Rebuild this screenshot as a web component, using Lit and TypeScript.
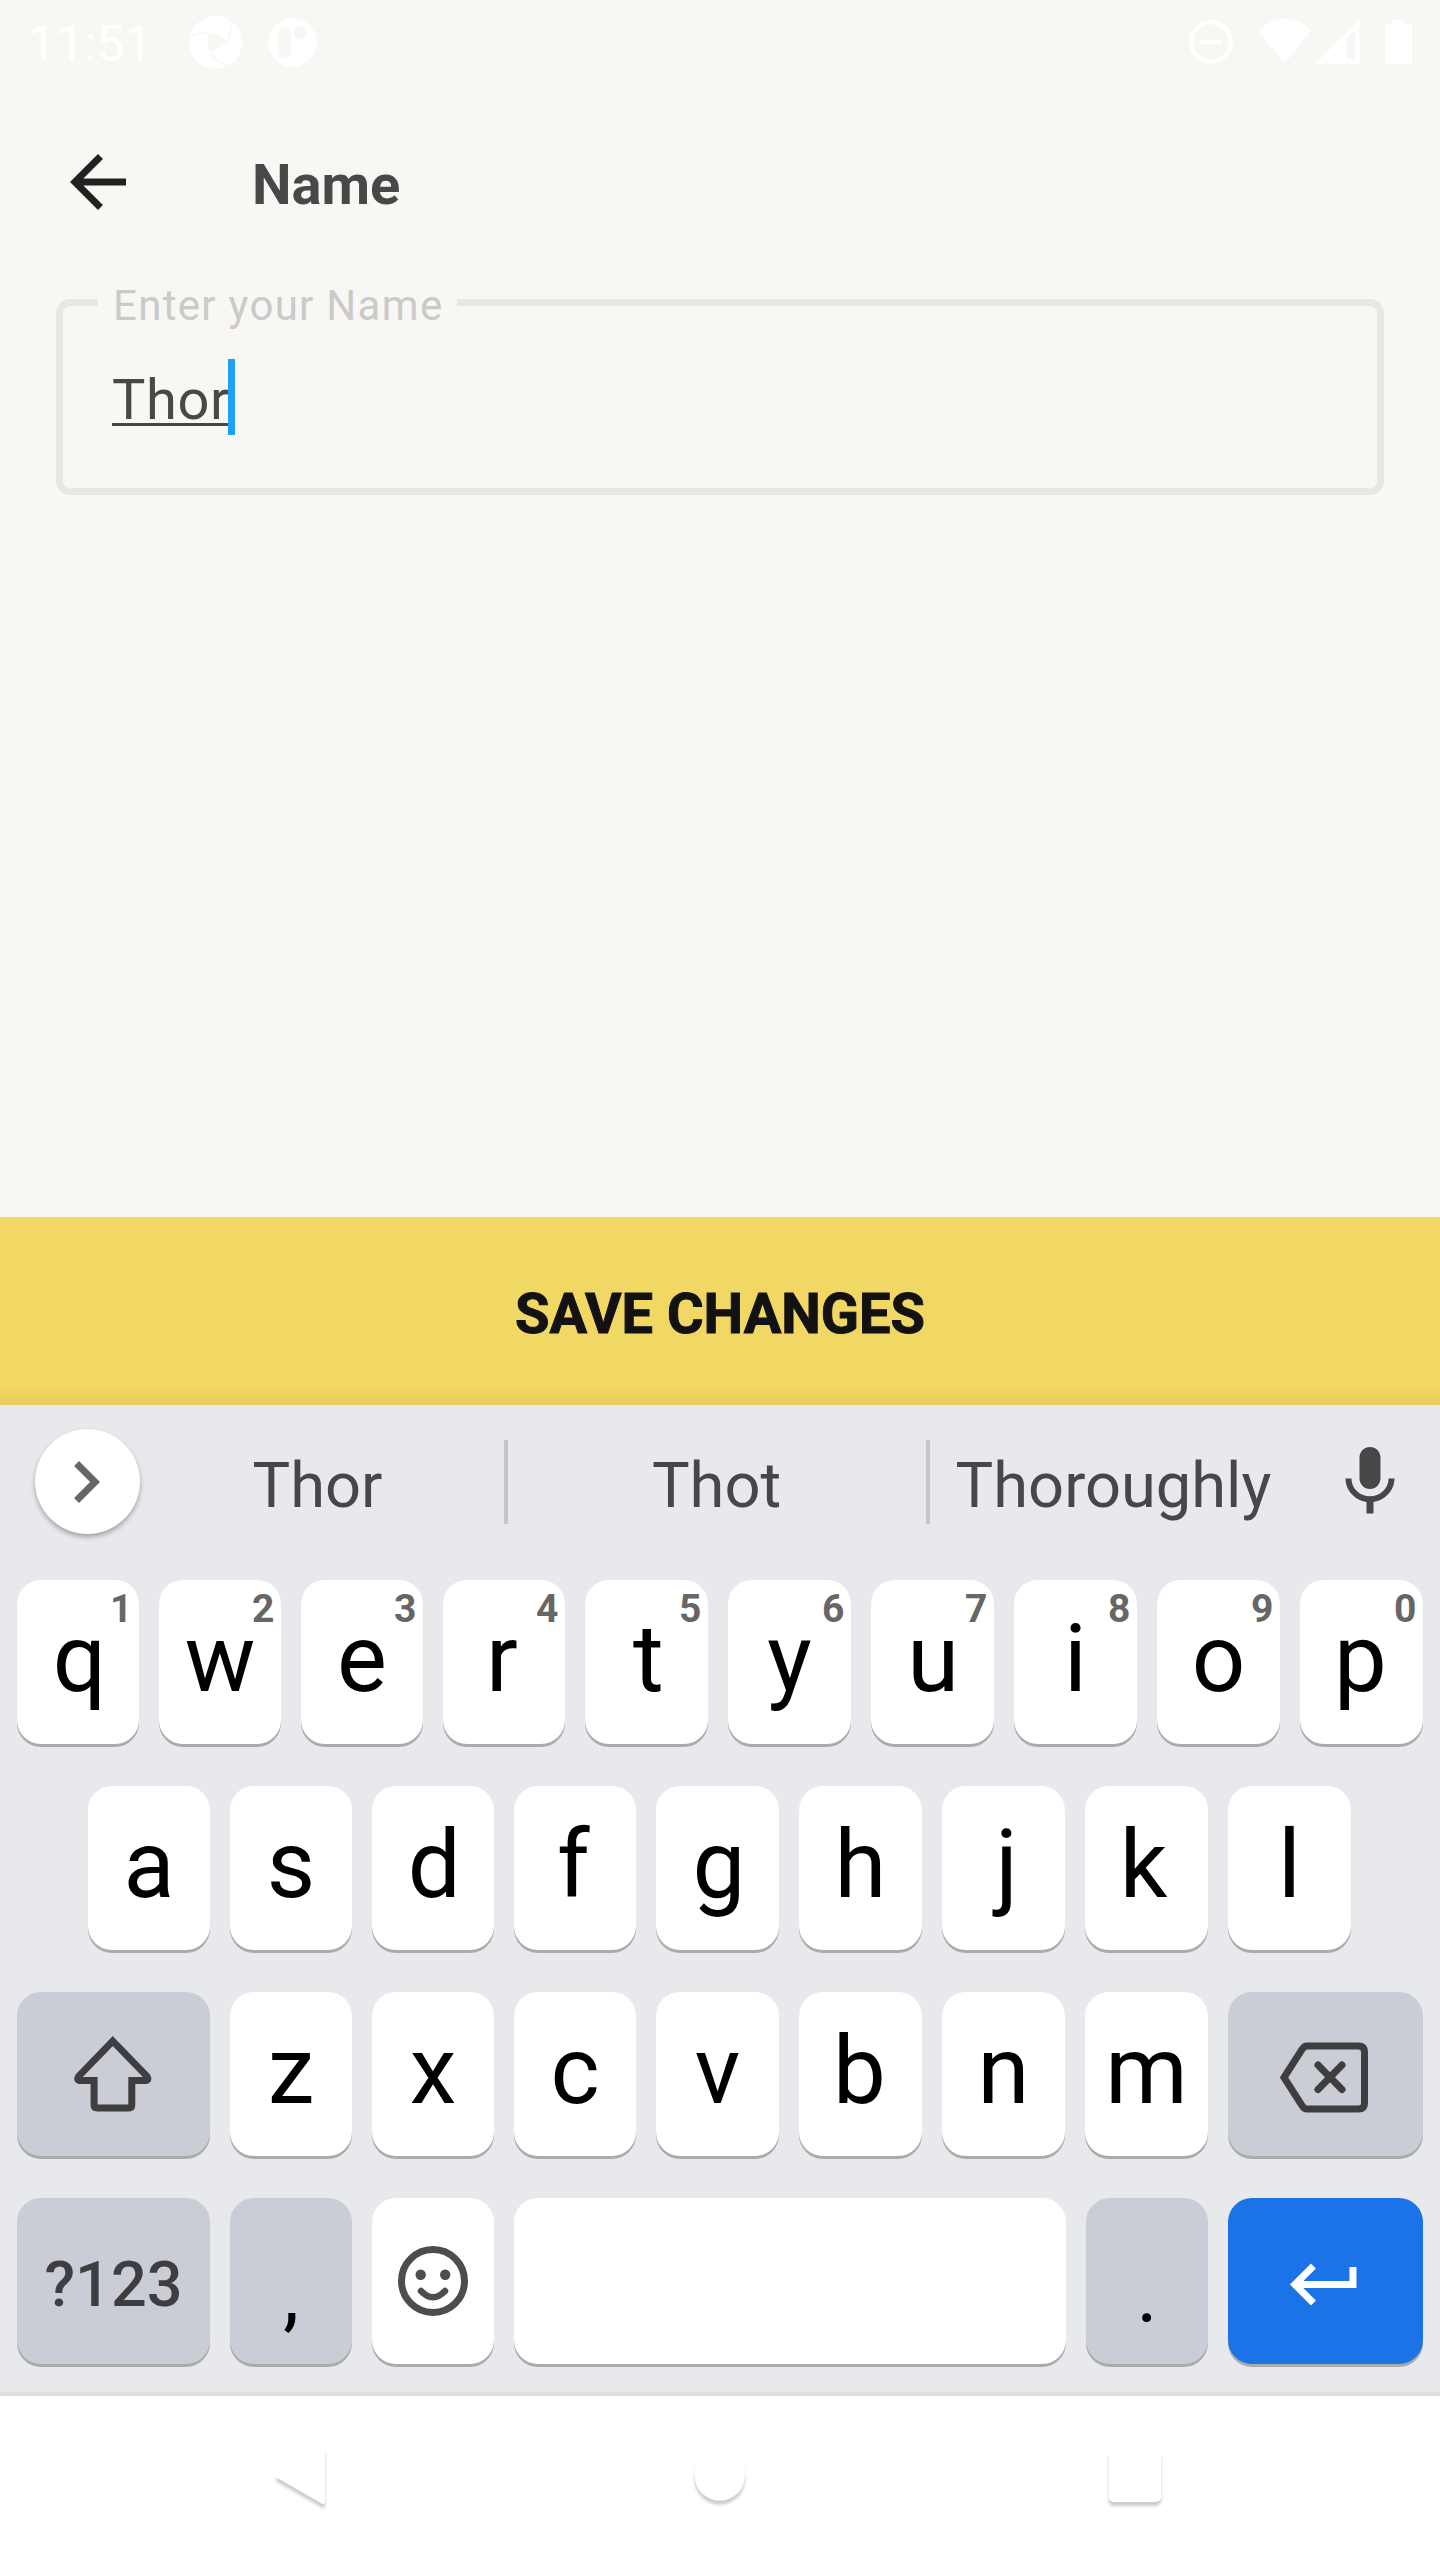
import { LitElement, html, svg, css, nothing } from "lit";
import { customElement, property } from "lit/decorators.js";

type KeyDef = { w: number; label?: string; hint?: string; icon?: string; kind?: string };

const letters = (s: string, narrow: number): KeyDef[] =>
  [...s].map((label, i) => ({ label, w: i < narrow ? 122 : 123 }));

// Optical shift that centres each glyph's ink, rather than its advance, on the key.
const OPTICAL: Record<string, number> = {
  q: 1.5, r: -2.2, t: 1.8, u: 0.6, p: -1.2, d: 1.2, f: -1.6, g: 1.5, j: 3.3, k: -3, b: -1.2,
};

const ROWS: KeyDef[][] = [
  letters("qwertyuiop", 4).map((k, i) => ({ ...k, hint: String((i + 1) % 10) })),
  letters("asdfghjkl", 4),
  [
    { w: 193, icon: "shift", kind: "mod" },
    ...letters("zxcvbnm", 3),
    { w: 195, icon: "backspace", kind: "mod" },
  ],
  [
    { w: 193, label: "?123", kind: "mod sym" },
    { w: 122, label: ",", kind: "mod punct" },
    { w: 122, icon: "emoji" },
    { w: 552 },
    { w: 122, label: ".", kind: "mod punct" },
    { w: 195, icon: "enter", kind: "enter" },
  ],
];

const ICONS: Record<string, unknown> = {
  shift: svg`<svg width="84" height="84" viewBox="1.2 0.4 84 84" fill="none" stroke="#3e3e40" stroke-width="7">
    <path d="M42 9.500L76 44.500q3 4.500-2.500 4.500H61V73.500q0 3-3 3H26.300q-3 0-3-3V49H10.500q-5.500 0-2.500-4.500Z"/></svg>`,
  backspace: svg`<svg width="92" height="84" viewBox="1.5 -3 92 84" fill="none" stroke="#3e3e40" stroke-width="7" stroke-linejoin="round">
    <path stroke-linejoin="miter" d="M5.500 42.500L23.500 14.500q2-3.500 5-3.500H80q6 0 6 6V68q0 6-6 6H28.500q-3 0-5-3.500Z"/>
    <path stroke-linecap="round" d="M39.500 30L63.500 54.500M63.500 30L39.500 54.500"/></svg>`,
  emoji: svg`<svg width="84" height="84" viewBox="0 0 84 84" fill="none" stroke="#4d4d4d">
    <circle cx="42" cy="42" r="31.500" stroke-width="7"/>
    <circle cx="29.700" cy="35.700" r="5.200" fill="#4d4d4d" stroke="none"/>
    <circle cx="54.200" cy="35.700" r="5.200" fill="#4d4d4d" stroke="none"/>
    <path d="M30 52Q42 64.500 54 52" stroke-width="6.500" stroke-linecap="round"/></svg>`,
  enter: svg`<svg width="84" height="84" viewBox="0.3 -1 24 24" fill="#fff">
    <path d="M19 7v4H5.830l3.580-3.590L8 6l-6 6 6 6 1.410-1.410L5.830 13H21V7z"/></svg>`,
};

@customElement("kb-key")
class KbKey extends LitElement {
  @property({ attribute: false }) def!: KeyDef;

  static styles = css`
    :host { display: block; }
    .key {
      position: relative; box-sizing: border-box; height: 100%;
      background: #fff; border-radius: 24px; box-shadow: 0 3px 0 #ababad;
      display: flex; justify-content: center; align-items: flex-start;
      color: #000; font-size: 94px; line-height: 110px; padding-top: 24px;
    }
    .mod { background: #cbcdd6; }
    .enter { background: #1b73e8; }
    .sym { font-size: 63px; font-weight: 500; color: #3e3e40; padding-top: 32px; }
    .punct { font-size: 80px; padding-top: 42px; }
    .hint {
      position: absolute; right: 6.5px; top: 10px;
      font-size: 39px; line-height: 39px; font-weight: 700; color: #666;
    }
    .icon { display: flex; align-self: center; margin-top: -24px; }
    svg { display: block; }
  `;

  render() {
    const k = this.def;
    const shift = 2 * (OPTICAL[k.label ?? ""] ?? 0);
    return html`<div class="key ${k.kind ?? ""}">
      ${k.label ? html`<span style="margin-left:${shift}px">${k.label}</span>` : nothing}
      ${k.icon ? html`<span class="icon">${ICONS[k.icon]}</span>` : nothing}
      ${k.hint ? html`<span class="hint">${k.hint}</span>` : nothing}
    </div>`;
  }
}

@customElement("app-root")
class AppRoot extends LitElement {
  static styles = css`
    :host {
      display: flex; flex-direction: column; width: 1440px; height: 2560px;
      background: #f8f7f3; font-family: Roboto, "Liberation Sans", sans-serif; overflow: hidden;
    }
    svg { display: block; }
    .status { height: 84px; display: flex; justify-content: space-between; flex: none; color: #fff; }
    .left { display: flex; padding-left: 28px; }
    .clock { font-size: 50px; line-height: 58px; padding-top: 15px; width: 152px; }
    .appbar { height: 197px; flex: none; display: flex; padding: 56px 0 0 56px; box-sizing: border-box; }
    .title { margin: 0 0 0 112px; font-size: 56px; line-height: 66px; font-weight: 700; color: #484848; padding-top: 12px; }
    .field {
      margin: 0 56px; border: 7px solid #e7e8e2; border-radius: 14px; height: 214px; min-width: 0;
      box-sizing: border-box; padding: 0 0 0 35px; flex: none;
    }
    .legend { padding: 6px 12px 0 15px; font-size: 42px; line-height: 37px; letter-spacing: 1.3px; color: #cacaca; width: 332px; box-sizing: content-box; }
    .input { display: flex; align-items: flex-start; padding: 35px 0 0 14px; font-size: 56px; color: #484848; }
    .typed { line-height: 76px; padding-top: 3px; letter-spacing: .6px; text-decoration: underline 3px; text-underline-offset: 4px; text-decoration-skip-ink: none; }
    .caret { width: 7px; height: 76px; background: #1da1f2; margin-left: -2px; }
    .spacer { flex: 1; }
    .save {
      height: 188px; flex: none; background: linear-gradient(#f1d764 0 170px, #e9cd5c 188px);
      color: #121212; font-size: 56px; font-weight: 700; text-align: center; line-height: 194px;
      -webkit-text-stroke: 1px #121212;
    }
    .keyboard { height: 987px; flex: none; background: #e8e9ed; border-bottom: 4px solid #e0e0e0; }
    .strip { height: 175px; display: flex; }
    .more {
      width: 105px; height: 105px; border-radius: 50%; background: #fff; margin: 24px 0 0 35px; flex: none;
      box-shadow: 0 3px 5px rgba(0,0,0,.3); display: flex; align-items: center; justify-content: center;
    }
    .more svg { margin-right: 4px; }
    .sug { font-size: 63.2px; line-height: 76px; color: #464749; padding-top: 42px; text-align: center; box-sizing: border-box; }
    .s1 { width: 364px; padding-right: 9px; }
    .s2 { width: 418px; padding-right: 1px; }
    .s3 { width: 367px; }
    .sep { width: 4px; height: 84px; background: #c5c6ca; margin-top: 35px; }
    .mic { padding: 35px 0 0 31px; }
    .rows { display: flex; flex-direction: column; gap: 42px; padding-left: 17px; }
    .row { display: flex; gap: 20px; height: 164px; }
    .row.home { padding-left: 71px; }
    .row.last { height: 166px; }
    .nav { height: 164px; flex: none; background: #fff; }
    .shade { filter: drop-shadow(0 4px 1.5px rgba(0,0,0,.2)); }
  `;

  render() {
    return html`
      <div class="status">
        <div class="left">
          <span class="clock">11:51</span>
          <svg width="150" height="84" viewBox="180 0 150 84">
            <circle cx="215.500" cy="42.500" r="26.500" fill="#fff"/>
            <path d="M208.500 33Q220 34 226.500 41.500Q219 50 210 52Q206 42 208.500 33Z" fill="#f8f7f3"/>
            <g fill="none" stroke="#f8f7f3" stroke-width="1.600">
              <path d="M189 38Q197 32 209 33M230.500 19Q232 34 226 42M210.500 53Q216 62 229 66"/>
            </g>
            <rect x="234.500" y="63.500" width="4.500" height="1.500" fill="#fff"/>
            <circle cx="292.500" cy="42.500" r="24.300" fill="#fff"/>
            <rect x="278.300" y="26.800" width="13" height="31.200" rx="6.500" fill="#f8f7f3"/>
            <circle cx="300.300" cy="33.200" r="6.600" fill="#f8f7f3"/>
          </svg>
        </div>
        <svg width="260" height="84" viewBox="1180 0 260 84" fill="#fff">
          <circle cx="1211" cy="42" r="19.800" fill="none" stroke="#fff" stroke-width="4.500"/>
          <rect x="1200" y="39.700" width="22" height="4.500"/>
          <path d="M1284.500 63.500L1258 31Q1270 19 1284.500 19T1311 31Z"/>
          <path fill-rule="evenodd" d="M1315 63.700L1359.600 19.500V63.700ZM1355 31L1346 40V59H1355Z"/>
          <path d="M1393 20h11v4h6q2 0 2 2v36.500q0 2-2 2h-23q-2 0-2-2V26q0-2 2-2h6z"/>
        </svg>
      </div>
      <div class="appbar">
        <svg width="84" height="84" viewBox="0 0 24 24" fill="#212121">
          <path d="M20 11H7.830l5.590-5.590L12 4l-8 8 8 8 1.410-1.410L7.830 13H20v-2z"/>
        </svg>
        <h1 class="title">Name</h1>
      </div>
      <fieldset class="field">
        <legend class="legend">Enter your Name</legend>
        <div class="input"><span class="typed">Thor</span><span class="caret"></span></div>
      </fieldset>
      <div class="spacer"></div>
      <div class="save">SAVE CHANGES</div>
      <div class="keyboard">
        <div class="strip">
          <div class="more">
            <svg width="84" height="84" viewBox="0 0 24 24" fill="#666">
              <path d="M10 6L8.590 7.410 13.170 12l-4.580 4.590L10 18l6-6z"/>
            </svg>
          </div>
          <div class="sug s1">Thor</div>
          <div class="sep"></div>
          <div class="sug s2">Thot</div>
          <div class="sep"></div>
          <div class="sug s3">Thoroughly</div>
          <div class="mic">
            <svg width="84" height="84" viewBox="0 0 24 24" fill="#464749">
              <path d="M12 14c1.660 0 2.990-1.340 2.990-3L15 5c0-1.660-1.340-3-3-3S9 3.340 9 5v6c0 1.660 1.340 3 3 3zm5.300-3c0 3-2.540 5.100-5.300 5.100S6.700 14 6.700 11H5c0 3.410 2.720 6.230 6 6.720V21h2v-3.280c3.280-.48 6-3.300 6-6.720h-1.700z"/>
            </svg>
          </div>
        </div>
        <div class="rows">
          ${ROWS.map(
            (row, i) => html`<div class="row ${i === 3 ? "last" : i === 1 ? "home" : ""}">
              ${row.map((k) => html`<kb-key .def=${k} style="width:${k.w}px"></kb-key>`)}
            </div>`
          )}
        </div>
      </div>
      <div class="nav">
        <svg width="1440" height="164" viewBox="0 2396 1440 164" fill="#fff">
          <path class="shade" stroke="#fff" stroke-width="4" stroke-linejoin="round" d="M278 2476L323 2450V2502Z"/>
          <circle class="shade" cx="719.800" cy="2475.500" r="25.200"/>
          <rect class="shade" x="1108.500" y="2449" width="52.500" height="53" rx="5"/>
        </svg>
      </div>
    `;
  }
}
